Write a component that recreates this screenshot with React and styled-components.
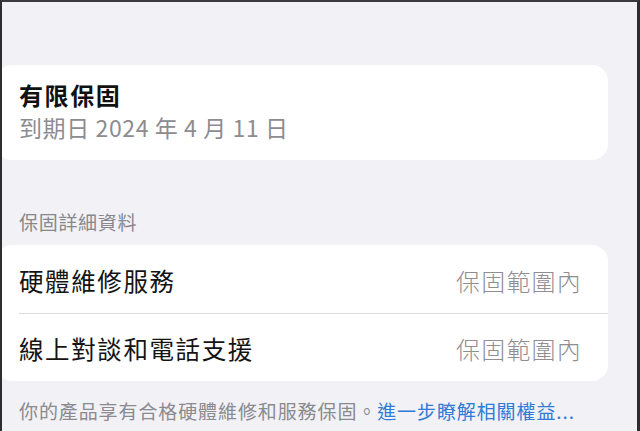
import React from "react";
import styled, { createGlobalStyle } from "styled-components";

const Global = createGlobalStyle`
  html, body { margin: 0; padding: 0; background: #f2f2f7; }
  body { font-family: "Noto Sans CJK TC", "Noto Sans", sans-serif; }
`;

const Frame = styled.div`
  box-sizing: border-box;
  width: 640px;
  height: 431px;
  overflow: hidden;
  background: #f1f1f6;
  border-top: 2px solid #3b3b3d;
  border-left: 2px solid #2e2e30;
  border-right: 3px solid #2e2e30;
  padding: 63px 29px 0 0;
  display: flex;
  flex-direction: column;
`;

const Card = styled.div`
  background: #ffffff;
  border-radius: 16px;
  margin-left: -6px;
  padding: ${(p) => p.$pad || "0"};
  display: flex;
  flex-direction: column;
`;

const Title = styled.div`
  font-size: 24px;
  font-weight: 700;
  line-height: 32px;
  color: #111;
  letter-spacing: 1.6px;
`;

const Subtitle = styled.div`
  font-size: 23px;
  line-height: 32px;
  color: #8c8c91;
  letter-spacing: 0.6px;
`;

const SectionHeader = styled.div`
  margin: 50px 0 11px 0;
  padding-left: 17px;
  font-size: 19px;
  line-height: 24px;
  color: #87878c;
  letter-spacing: 0.7px;
`;

const Row = styled.div`
  height: 68px;
  display: flex;
  align-items: center;
  justify-content: space-between;
  padding: 2px 26px 0 0;
  margin-left: 23px;
  box-sizing: border-box;
  border-top: ${(p) => (p.$divider ? "1px solid #dcdce0" : "none")};
`;

const RowLabel = styled.span`
  font-size: 24.5px;
  color: #141414;
  letter-spacing: 1.6px;
`;

const RowValue = styled.span`
  font-size: 24px;
  color: #8e8e93;
  font-weight: 300;
  letter-spacing: 1.2px;
`;

const Footer = styled.div`
  margin-top: 18px;
  padding-left: 17px;
  font-size: 19px;
  line-height: 24px;
  color: #8a8a8f;
  white-space: nowrap;
  letter-spacing: 0.9px;
`;

const Link = styled.span`
  color: #2f7bd6;
`;

export default function App() {
  return (
    <>
      <Global />
      <Frame>
        <Card $pad="14px 18px 17px 23px">
          <Title>有限保固</Title>
          <Subtitle>到期日 2024 年 4 月 11 日</Subtitle>
        </Card>
        <SectionHeader>保固詳細資料</SectionHeader>
        <Card>
          <Row>
            <RowLabel>硬體維修服務</RowLabel>
            <RowValue>保固範圍內</RowValue>
          </Row>
          <Row $divider>
            <RowLabel>線上對談和電話支援</RowLabel>
            <RowValue>保固範圍內</RowValue>
          </Row>
        </Card>
        <Footer>
          你的產品享有合格硬體維修和服務保固。<Link>進一步瞭解相關權益...</Link>
        </Footer>
      </Frame>
    </>
  );
}
